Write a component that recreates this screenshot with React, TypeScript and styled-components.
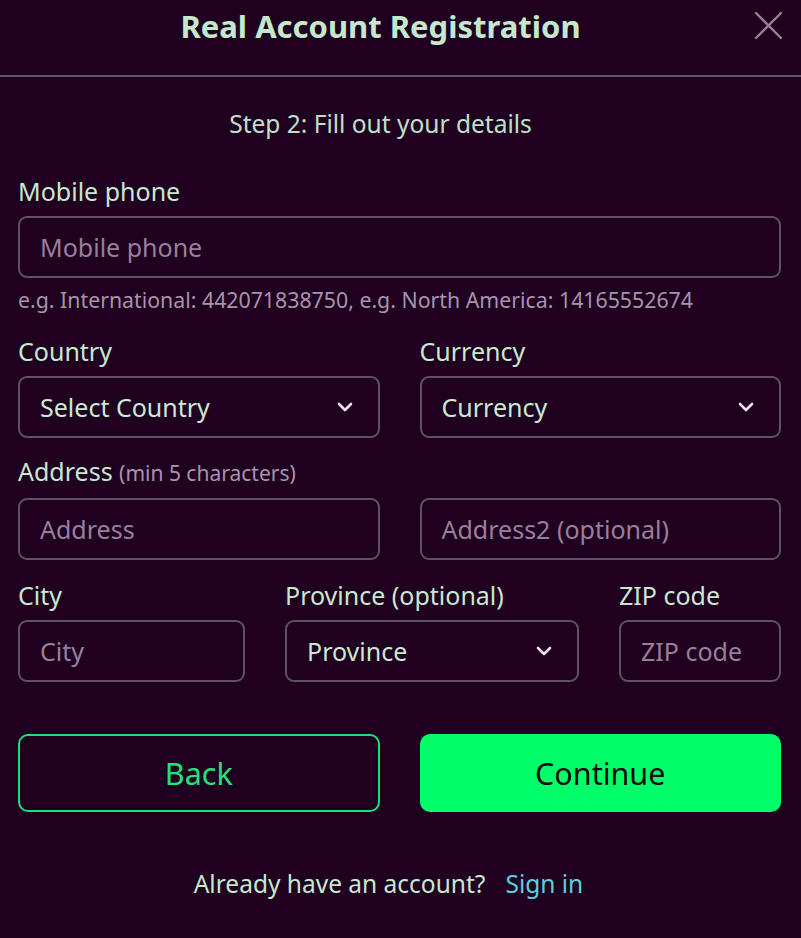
import React from "react";
import styled, { createGlobalStyle } from "styled-components";

const Global = createGlobalStyle`
  html, body { margin: 0; padding: 0; background: #1f0020; }
  body { font-family: "Noto Sans", "Open Sans", sans-serif; }
  * { box-sizing: border-box; }
`;

const Page = styled.div`
  width: 801px;
  height: 938px;
  background: #1f0020;
  display: flex;
  flex-direction: column;
`;

const Header = styled.header`
  position: relative;
  height: 77px;
  border-bottom: 2px solid #5e5868;
  display: flex;
  justify-content: center;
  padding: 6px 40px 0 0;
`;

const Title = styled.h1`
  margin: 0;
  font-size: 31px;
  font-weight: 700;
  color: #c4e8cc;
  line-height: 40px;
`;

const Close = styled.button`
  position: absolute;
  right: 16px;
  top: 10px;
  width: 32px;
  height: 32px;
  background: none;
  border: none;
  padding: 0;
  cursor: pointer;
`;

const Body = styled.div`
  padding: 0 20px 0 18px;
  display: flex;
  flex-direction: column;
`;

const Step = styled.p`
  margin: 31px 38px 0 0;
  text-align: center;
  font-size: 24.5px;
  color: #bfe0c8;
  line-height: 32px;
`;

const Field = styled.div<{ $mt?: number }>`
  display: flex;
  flex-direction: column;
  min-width: 0;
  margin-top: ${(p) => p.$mt ?? 0}px;
`;

const Label = styled.label`
  font-size: 25px;
  color: #c8e8d0;
  line-height: 32px;
  margin-bottom: 9px;
  white-space: nowrap;
`;

const Hint = styled.span`
  font-size: 21px;
  color: #a993ac;
`;

const Input = styled.input`
  height: 62px;
  width: 100%;
  background: transparent;
  border: 2px solid #5f5167;
  border-radius: 9px;
  padding: 0 20px;
  font-family: inherit;
  font-size: 25px;
  color: #e0d0e4;
  outline: none;
  &::placeholder { color: #9a7f9d; }
`;

const SelectBox = styled.div`
  height: 62px;
  width: 100%;
  border: 2px solid #5f5167;
  border-radius: 9px;
  padding: 0 24px 0 20px;
  display: flex;
  align-items: center;
  justify-content: space-between;
  font-size: 25px;
  color: #cbe9d3;
`;

const Help = styled.p`
  margin: 8px 0 0;
  font-size: 21.3px;
  color: #a993ac;
  line-height: 28px;
  white-space: nowrap;
`;

const Row = styled.div<{ $cols: string; $mt: number }>`
  display: grid;
  grid-template-columns: ${(p) => p.$cols};
  column-gap: 40px;
  margin-top: ${(p) => p.$mt}px;
  align-items: end;
`;

const Buttons = styled.div`
  display: grid;
  grid-template-columns: 1fr 1fr;
  column-gap: 40px;
  margin-top: 52px;
`;

const Button = styled.button<{ $primary?: boolean }>`
  height: 78px;
  border-radius: 10px;
  font-family: inherit;
  font-size: 30.5px;
  cursor: pointer;
  border: 2px solid ${(p) => (p.$primary ? "#00ff68" : "#1ee07a")};
  background: ${(p) => (p.$primary ? "#00ff68" : "transparent")};
  color: ${(p) => (p.$primary ? "#0a0a0a" : "#22e27a")};
`;

const Footer = styled.p`
  margin: 56px 22px 0 0;
  text-align: center;
  font-size: 24.5px;
  color: #c8e8d0;
  line-height: 32px;
`;

const Link = styled.a`
  color: #5ad0dc;
  text-decoration: none;
  margin-left: 20px;
`;

const Chevron = () => (
  <svg width="18" height="12" viewBox="0 0 18 12" fill="none">
    <path d="M3 3 L9 9 L15 3" stroke="#efe0f2" strokeWidth="2.6" strokeLinecap="round" strokeLinejoin="round" />
  </svg>
);

const Select = ({ text }: { text: string }) => (
  <SelectBox>
    <span>{text}</span>
    <Chevron />
  </SelectBox>
);

export default function App() {
  return (
    <>
      <Global />
      <Page>
        <Header>
          <Title>Real Account Registration</Title>
          <Close aria-label="Close">
            <svg width="32" height="32" viewBox="0 0 32 32">
              <path d="M3 3 L28 28 M28 3 L3 28" stroke="#9d7aa0" strokeWidth="2.4" strokeLinecap="round" />
            </svg>
          </Close>
        </Header>
        <Body>
          <Step>Step 2: Fill out your details</Step>
          <Field $mt={35}>
            <Label>Mobile phone</Label>
            <Input placeholder="Mobile phone" />
            <Help>e.g. International: 442071838750, e.g. North America: 14165552674</Help>
          </Field>
          <Row $cols="1fr 1fr" $mt={21}>
            <Field>
              <Label>Country</Label>
              <Select text="Select Country" />
            </Field>
            <Field>
              <Label>Currency</Label>
              <Select text="Currency" />
            </Field>
          </Row>
          <Row $cols="1fr 1fr" $mt={17}>
            <Field>
              <Label>
                Address <Hint>(min 5 characters)</Hint>
              </Label>
              <Input placeholder="Address" />
            </Field>
            <Field>
              <Input placeholder="Address2 (optional)" />
            </Field>
          </Row>
          <Row $cols="227px 294px 1fr" $mt={19}>
            <Field>
              <Label>City</Label>
              <Input placeholder="City" />
            </Field>
            <Field>
              <Label>Province (optional)</Label>
              <Select text="Province" />
            </Field>
            <Field>
              <Label>ZIP code</Label>
              <Input placeholder="ZIP code" />
            </Field>
          </Row>
          <Buttons>
            <Button>Back</Button>
            <Button $primary>Continue</Button>
          </Buttons>
          <Footer>
            Already have an account?<Link href="#">Sign in</Link>
          </Footer>
        </Body>
      </Page>
    </>
  );
}
